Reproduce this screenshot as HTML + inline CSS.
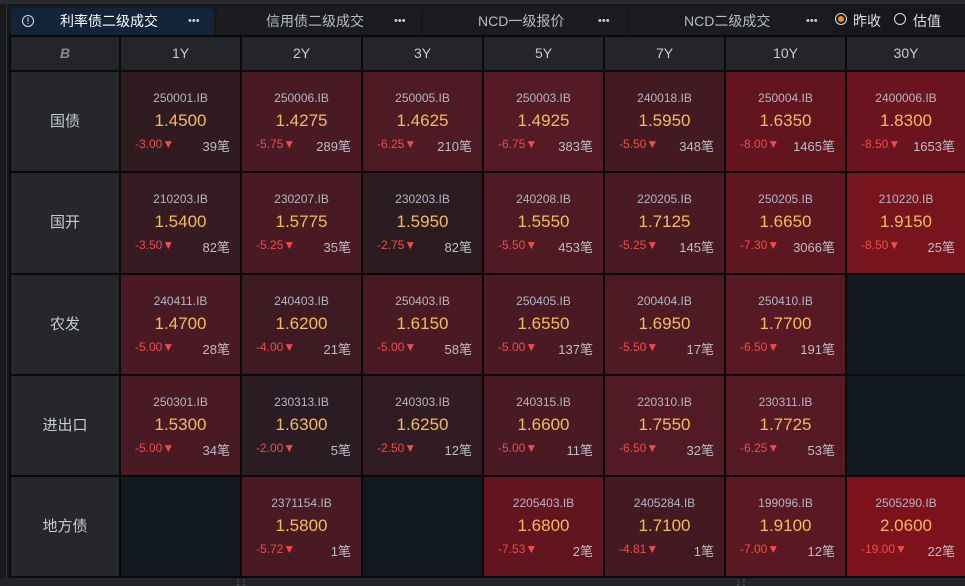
<!DOCTYPE html><html><head><meta charset="utf-8"><style>
body{margin:0;width:965px;height:586px;background:#17181b;overflow:hidden;font-family:"Liberation Sans","Noto Sans CJK SC",sans-serif;position:relative}
.a{position:absolute}
.tab{position:absolute;top:8px;height:27px;background:#1b1c1f;border-radius:3px 3px 0 0;color:#b8bcc4;font-size:14px;line-height:27px}
.grid{position:absolute;left:9px;top:35px;width:956px;height:543px;background:#0a0a0b}
.c{position:absolute;text-align:center}
.h{background:#232529;color:#c8ccd2;font-size:14px;line-height:33px}
.l{background:#25272b;color:#c8ccd2;font-size:15px}
.code{position:absolute;top:19px;left:0;right:0;font-size:12px;color:#b4b6c4}
.v{position:absolute;top:39px;left:0;right:0;font-size:17px;color:#f4bc58}
.ch{position:absolute;top:65px;left:14px;font-size:12px;color:#f24a4a}
.n{position:absolute;top:64px;right:10px;font-size:13px;color:#bcbec8}
.dots{color:#c8ccd2;font-size:11px;letter-spacing:0}
</style></head><body>
<div class="a" style="left:0;top:0;width:965px;height:4px;background:#2a2b2e"></div>
<div class="a" style="left:6px;top:4px;width:1px;height:575px;background:#333"></div>
<div class="tab" style="left:11px;width:203px;background:#13233a;color:#fff">
<span class="a" style="left:11px;top:7px;width:10px;height:10px;border:1.5px solid #ddd;border-radius:50%;font-size:9px;line-height:10px;text-align:center">!</span>
<span class="a" style="left:49px">利率债二级成交</span><span class="a dots" style="left:177px">•••</span></div>
<div class="tab" style="left:217px;width:203px"><span class="a" style="left:49px">信用债二级成交</span><span class="a dots" style="left:177px">•••</span></div>
<div class="tab" style="left:423px;width:203px"><span class="a" style="left:55px">NCD一级报价</span><span class="a dots" style="left:175px">•••</span></div>
<div class="tab" style="left:629px;width:203px"><span class="a" style="left:55px">NCD二级成交</span><span class="a dots" style="left:177px">•••</span></div>
<div class="a" style="left:835px;top:13px;width:10px;height:10px;border:1.5px solid #ddd;border-radius:50%"><div class="a" style="left:2px;top:2px;width:6px;height:6px;border-radius:50%;background:#f08a1a"></div></div>
<div class="a" style="left:853px;top:11px;font-size:14px;color:#dde">昨收</div>
<div class="a" style="left:894px;top:13px;width:10px;height:10px;border:1.5px solid #ddd;border-radius:50%"></div>
<div class="a" style="left:913px;top:11px;font-size:14px;color:#dde">估值</div>
<div class="a" style="left:0;top:578px;width:965px;height:8px;background:#232427"></div>
<div class="a" style="left:235px;top:579px;font-size:6px;color:#aaa">⋮⋮</div>
<div class="a" style="left:735px;top:579px;font-size:6px;color:#aaa">⋮⋮</div>
<div class="grid"></div>
<div id="g"></div>
<script>
var X=[11,121,242,363,484,605,726,847],W=[108,119,119,119,119,119,119,118];
var Y=[72,173,275,376,477],H=[99,100,99,99,99];
var hd=["B","1Y","2Y","3Y","5Y","7Y","10Y","30Y"];
var lb=["国债","国开","农发","进出口","地方债"];
var E="#131920";
var d=[
[["#301b21","250001.IB","1.4500","-3.00","39"],["#4a1a24","250006.IB","1.4275","-5.75","289"],["#4e1a24","250005.IB","1.4625","-6.25","210"],["#541a25","250003.IB","1.4925","-6.75","383"],["#431a22","240018.IB","1.5950","-5.50","348"],["#62141f","250004.IB","1.6350","-8.00","1465"],["#6b141f","2400006.IB","1.8300","-8.50","1653"]],
[["#361b22","210203.IB","1.5400","-3.50","82"],["#4a1a24","230207.IB","1.5775","-5.25","35"],["#2a1c21","230203.IB","1.5950","-2.75","82"],["#4e1a24","240208.IB","1.5550","-5.50","453"],["#4a1a24","220205.IB","1.7125","-5.25","145"],["#5e1620","250205.IB","1.6650","-7.30","3066"],["#78141d","210220.IB","1.9150","-8.50","25"]],
[["#4a1a24","240411.IB","1.4700","-5.00","28"],["#3e1a22","240403.IB","1.6200","-4.00","21"],["#4a1a24","250403.IB","1.6150","-5.00","58"],["#4a1a24","250405.IB","1.6550","-5.00","137"],["#4e1a24","200404.IB","1.6950","-5.50","17"],["#571923","250410.IB","1.7700","-6.50","191"],null],
[["#4a1a24","250301.IB","1.5300","-5.00","34"],["#2a1c22","230313.IB","1.6300","-2.00","5"],["#301c22","240303.IB","1.6250","-2.50","12"],["#4a1a24","240315.IB","1.6600","-5.00","11"],["#521a25","220310.IB","1.7550","-6.50","32"],["#561a24","230311.IB","1.7725","-6.25","53"],null],
[null,["#4a1a24","2371154.IB","1.5800","-5.72","1"],null,["#62141f","2205403.IB","1.6800","-7.53","2"],["#431a22","2405284.IB","1.7100","-4.81","1"],["#5a1822","199096.IB","1.9100","-7.00","12"],["#7e121c","2505290.IB","2.0600","-19.00","22"]]];
var s="";
for(var i=0;i<8;i++)s+='<div class="c h" style="left:'+X[i]+'px;top:37px;width:'+W[i]+'px;height:33px">'+(i==0?'<b style="color:#888;font-style:italic">B</b>':hd[i])+'</div>';
for(var r=0;r<5;r++){s+='<div class="c l" style="left:11px;top:'+Y[r]+'px;width:108px;height:'+H[r]+'px;line-height:'+H[r]+'px">'+lb[r]+'</div>';
for(var c=0;c<7;c++){var e=d[r][c],st='left:'+X[c+1]+'px;top:'+Y[r]+'px;width:'+W[c+1]+'px;height:'+H[r]+'px;';
if(!e){s+='<div class="c" style="'+st+'background:'+E+'"></div>';continue;}
s+='<div class="c" style="'+st+'background:'+e[0]+'"><div class="code">'+e[1]+'</div><div class="v">'+e[2]+'</div><div class="ch">'+e[3]+'▼</div><div class="n">'+e[4]+'笔</div></div>';}}
document.getElementById("g").innerHTML=s;
</script>
</body></html>
